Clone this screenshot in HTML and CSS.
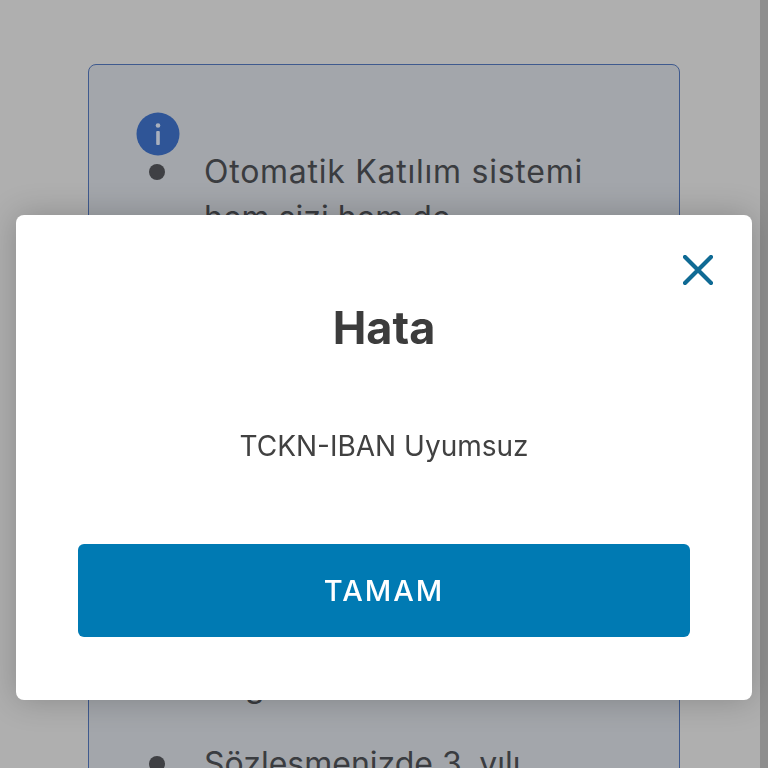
FILE: index.html
```html
<!DOCTYPE html>
<html lang="tr">

<head>
    <meta charset="UTF-8">
    <title>Hata</title>
    <link rel="stylesheet" href="styles.css">
</head>

<body>
    <div class="page">
        <main class="content">
            <section class="notice">
                <svg class="info-icon" viewBox="0 0 44 44" aria-hidden="true">
                    <circle cx="22" cy="22" r="21.5" fill="#2f5597"></circle>
                    <circle cx="22" cy="13.5" r="2.3" fill="#a9b0bd"></circle>
                    <rect x="20.2" y="19" width="3.6" height="14" rx="1" fill="#a9b0bd"></rect>
                </svg>
                <ul class="notice-list">
                    <li>
                        <div>
                            <span class="notice-lead">Otomatik Katılım sistemi</span><br>hem sizi hem de
                            <span class="notice-tail">g</span>
                        </div>
                    </li>
                    <li>
                        <div>Sözleşmenizde 3. yılı</div>
                    </li>
                </ul>
            </section>
        </main>
        <div class="scrollbar"></div>
    </div>

    <div class="overlay">
        <div class="modal">
            <button class="close" aria-label="Kapat">
                <svg viewBox="0 0 30 30" aria-hidden="true">
                    <path d="M2 2 L28 28 M28 2 L2 28" fill="none" stroke="#0f6a94" stroke-width="4.2" stroke-linecap="round"></path>
                </svg>
            </button>
            <h1 class="modal-title">Hata</h1>
            <p class="modal-text">TCKN-IBAN Uyumsuz</p>
            <button class="modal-button">TAMAM</button>
        </div>
    </div>
</body>

</html>
```

FILE: styles.css
```css
html, body {
    height: 100%;
    margin: 0;
    overflow: hidden;
}

body {
    background-color: #afafaf;
    font-family: 'Inter', 'Liberation Sans', sans-serif;
}

.page {
    display: flex;
    height: 768px;
}

.content {
    flex: 1;
    padding: 64px 80px 0 88px;
    overflow: hidden;
}

.scrollbar {
    width: 8px;
    background-color: #8e8e8e;
}

.notice {
    border: 1.5px solid #3f5a8e;
    border-radius: 8px;
    background-color: #a3a6ab;
    padding: 46.5px 47px 0;
    height: 900px;
}

.info-icon {
    display: block;
    width: 44px;
    height: 44px;
}

.notice-list {
    margin: -7px 0 0;
    padding: 0 0 0 13px;
    list-style: none;
    font-size: 32px;
    line-height: 46px;
    color: #3a3c40;
}

.notice-list li {
    display: flex;
    gap: 39px;
    margin-bottom: 32px;
}

.notice-list li::before {
    content: '';
    flex: none;
    width: 16px;
    height: 16px;
    margin-top: 15px;
    border-radius: 50%;
    background-color: #3f4044;
}

.notice-lead {
    letter-spacing: 0.75px;
}

.notice-tail {
    display: block;
    margin-top: 422px;
    padding-left: 41px;
}

.overlay {
    position: fixed;
    top: 0;
    left: 0;
    width: 768px;
    height: 768px;
    box-sizing: border-box;
    padding: 215px 16px 68px;
}

.modal {
    display: flex;
    flex-direction: column;
    align-items: center;
    height: 100%;
    padding: 40px 62px 63px;
    box-sizing: border-box;
    background-color: white;
    border-radius: 8px;
    box-shadow: 0 0 32px rgba(0, 0, 0, 0.22);
}

.close {
    align-self: flex-end;
    width: 30px;
    height: 30px;
    margin-right: -23px;
    padding: 0;
    border: none;
    background: none;
}

.close svg {
    display: block;
}

.modal-title {
    margin: 16px 0 0;
    font-size: 45px;
    line-height: 54px;
    font-weight: 700;
    color: #3c3c3c;
}

.modal-text {
    margin: 71px 0 0;
    font-size: 28px;
    line-height: 40px;
    color: #414141;
}

.modal-button {
    width: 100%;
    height: 93px;
    margin-top: auto;
    border: none;
    border-radius: 6px;
    background-color: #007ab3;
    color: white;
    font-family: inherit;
    font-size: 29px;
    font-weight: 500;
    letter-spacing: 2px;
}
```
